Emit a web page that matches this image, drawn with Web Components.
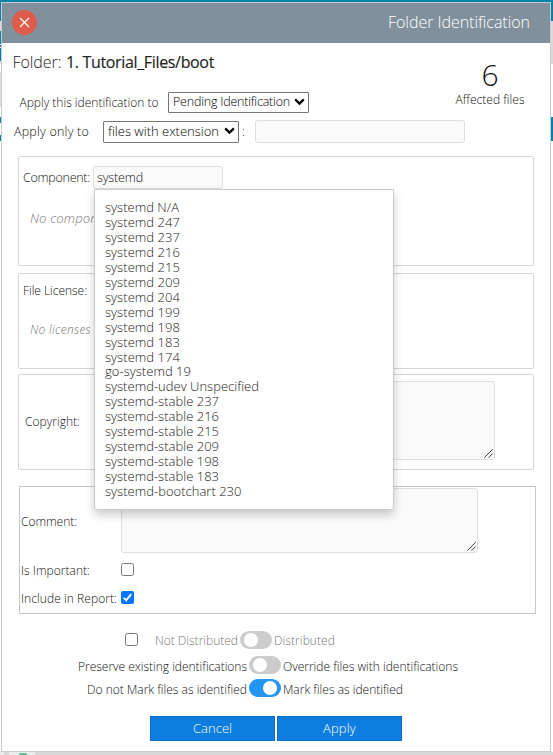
<!DOCTYPE html>
<html lang="en"><head><meta charset="utf-8"><title>Folder Identification</title>
<style>
html,body{margin:0;height:755px;overflow:hidden}
body{font-family:"Open Sans","Noto Sans",sans-serif;font-weight:300;font-size:12px;color:#111}
</style></head><body><app-page></app-page>
<script>
const define=(name,html,init)=>customElements.define(name,class extends HTMLElement{
  connectedCallback(){
    if(this.shadowRoot)return;
    this.attachShadow({mode:'open'}).innerHTML='<style>*{box-sizing:border-box}</style>'+html;
    if(init)init.call(this,this.shadowRoot);
  }
});
// Single line of text, tracked to the width given in "w"
define('ui-text',`<style>:host{display:block;white-space:nowrap;flex:none}span{display:inline-block}</style><span><slot></slot></span>`,function(r){
  const w=+this.getAttribute('w'),s=r.querySelector('span'),n=this.textContent.length;
  if(this.hasAttribute('size'))s.style.fontSize=this.getAttribute('size')+'px';
  if(w){this.style.width=w+'px';s.style.letterSpacing=((w-s.getBoundingClientRect().width)/n).toFixed(4)+'px';}
});
define('ui-select',`<style>:host{display:flex;box-sizing:border-box;align-items:center;border:1px solid #767676;border-radius:1px;background:#fff;padding:0 3px 1px 4px;justify-content:space-between;color:#000;flex:none}</style>
<slot></slot><svg width="11" height="8" viewBox="0 0 11 8"><path d="M1.2 1.4 5.5 5.6 9.8 1.4" fill="none" stroke="#000" stroke-width="2.2"/></svg>`);
define('ui-input',`<style>:host{display:flex;box-sizing:border-box;align-items:center;border:1px solid #dedede;border-radius:3px;background:#fafafa;padding-left:3px;flex:none}</style><slot></slot>`);
define('ui-textarea',`<style>:host{display:flex;box-sizing:border-box;align-items:flex-end;justify-content:flex-end;border:1px solid #dedede;border-radius:3px;background:#fafafa;flex:none;padding:1px}</style>
<svg width="9" height="9" viewBox="0 0 9 9"><path d="M.3 8.7 8.7 .3M4.5 8.7 8.7 4.5" stroke="#444" stroke-width="1" fill="none"/></svg>`);
define('ui-check',`<style>:host{display:block;width:13px;height:13px;flex:none}svg{display:block}.on{display:none}:host([checked]) .on{display:block}:host([checked]) .off{display:none}</style>
<svg width="13" height="13"><rect class="off" x=".5" y=".5" width="12" height="12" rx="2" fill="#fff" stroke="#767676"/><g class="on"><rect width="13" height="13" rx="2" fill="#0075ff"/><path d="M2.7 6.9 5.2 9.3 10.2 3.2" fill="none" stroke="#fff" stroke-width="2"/></g></svg>`);
define('ui-toggle',`<style>:host{display:flex;box-sizing:border-box;width:32px;height:18px;border-radius:9px;background:#ccc;padding:2px 4px;flex:none}i{width:14px;height:14px;border-radius:7px;background:#fff}:host([on]){background:#2196f3;justify-content:flex-end;padding-right:4px}</style><i></i>`);
define('ui-button',`<style>:host{display:flex;box-sizing:border-box;width:125px;height:25px;align-items:center;justify-content:center;background:#0d7de0;border:1px solid #0b6fca;color:#fff;font-size:13px;padding-bottom:1px}</style><slot></slot>`);
define('ui-panel',`<style>:host{display:block;box-sizing:border-box;border:1px solid #d5d5d5;border-radius:2px;position:relative}</style><slot></slot>`);
define('suggest-list',`<style>:host{display:block;box-sizing:border-box;position:absolute;left:75px;top:32px;width:300px;height:321px;background:#fff;border:1px solid #ccc;border-radius:0 0 3px 3px;box-shadow:0 5px 10px rgba(0,0,0,.2);padding:10px;z-index:5;font-size:13px;color:#222}
ui-text{height:15px;line-height:15px}ui-text:nth-child(12){height:14px}</style><div></div>`,function(r){
  r.querySelector('div').innerHTML='<i hidden></i>'+[['systemd N/A',74],['systemd 247',75],['systemd 237',75],['systemd 216',75],['systemd 215',75],['systemd 209',75],['systemd 204',75],['systemd 199',75],['systemd 198',75],['systemd 183',75],['systemd 174',75],['go-systemd 19',86],['systemd-udev Unspecified',154],['systemd-stable 237',114],['systemd-stable 216',114],['systemd-stable 215',114],['systemd-stable 209',114],['systemd-stable 198',114],['systemd-stable 183',114],['systemd-bootchart 230',136.5]].map(([t,w])=>`<ui-text w="${w}">${t}</ui-text>`).join('');
});
define('dialog-header',`<style>:host{display:flex;box-sizing:border-box;height:40px;background:#80919d;align-items:center;justify-content:space-between;padding:0 20px 2px 10px;color:#fff}svg{display:block}</style>
<svg width="25" height="25"><circle cx="12.5" cy="12.5" r="12.5" fill="#dc5b4b"/><path d="M8 8 17 17M17 8 8 17" stroke="#fff" stroke-width="1.2"/></svg><ui-text w="142" size="16">Folder Identification</ui-text>`);
define('dialog-intro',`<style>:host{display:flex;height:113px}.main{width:448px;flex:none}
.row{display:flex;align-items:center}.a{height:38px;padding:0 0 0 10.5px;gap:4.5px;font-size:16px;color:#222}.a b{font-weight:400;-webkit-text-stroke:.15px #222}
.b{height:22px;margin-top:10px;padding-left:17.5px}.c{height:23px;margin-top:7px;padding-left:12px}
.count{width:80px;flex:none;padding:14px 0 0;display:flex;flex-direction:column;align-items:center}.n{font-size:30px;line-height:35px}.l{line-height:16px}
</style><div class="main"><div class="row a"><ui-text w="49">Folder:</ui-text><b><ui-text w="148">1. Tutorial_Files/boot</ui-text></b></div>
<div class="row b"><ui-text w="139" style="margin-right:9.5px">Apply this identification to</ui-text><ui-select style="width:141px;height:21px"><ui-text w="117" size="12.5">Pending Identification</ui-text></ui-select></div>
<div class="row c"><ui-text w="75" size="12.5" style="margin-right:14px">Apply only to</ui-text><ui-select style="width:136px;height:22px"><ui-text w="111" size="13">files with extension</ui-text></ui-select><ui-text w="3" style="margin:0 10px 0 3px">:</ui-text><ui-input style="width:210px;height:23px"></ui-input></div></div>
<div class="count"><div class="n">6</div><ui-text class="l" w="69">Affected files</ui-text></div>`);
define('dialog-panels',`<style>:host{display:block;padding-left:16px}.r{display:flex;align-items:center}.em{font-style:italic;color:#777}</style>
<ui-panel style="width:516px;height:110px"><div class="r" style="padding:9px 0 0 4px"><ui-text w="67" style="margin-right:3px" size="12.5">Component:</ui-text><ui-input style="width:130px;height:23px"><ui-text w="46" size="12.5">systemd</ui-text></ui-input></div>
<div class="em" style="padding:20px 0 0 11px"><ui-text w="92" size="13">No components</ui-text></div><suggest-list></suggest-list></ui-panel>
<ui-panel style="width:516px;height:96px;margin-top:7px"><div style="padding:8px 0 0 4px"><ui-text w="64">File License:</ui-text></div><div class="em" style="padding:22px 0 0 11px"><ui-text w="61">No licenses</ui-text></div></ui-panel>
<ui-panel style="width:516px;height:96px;margin-top:5px"><div class="r" style="padding:6px 0 0 6px"><ui-text w="55" style="margin-right:41px;padding-top:2px">Copyright:</ui-text><ui-textarea style="width:374px;height:79px"></ui-textarea></div></ui-panel>
<ui-panel style="width:517px;height:128px;margin:16px 0 0 1px;border-color:#c6c6c6;border-radius:0"><div class="r" style="padding:1px 0 0 1px"><ui-text w="56" style="margin-right:44px;padding-top:2px">Comment:</ui-text><ui-textarea style="width:357px;height:65px"></ui-textarea></div>
<div class="r" style="height:28px;margin-top:3px;padding:1px 0 0 1px"><ui-text w="69" style="margin-right:31px">Is Important:</ui-text><ui-check style="margin-top:-2px"></ui-check></div>
<div class="r" style="height:28px;padding:1px 0 0 1px"><ui-text w="96" style="margin-right:4px">Include in Report:</ui-text><ui-check checked style="margin-top:-2px"></ui-check></div></ui-panel>`);
define('dialog-options',`<style>:host{display:block;padding-top:17px}.r{display:flex;align-items:center;height:18px}ui-text{line-height:18px;padding-top:4px}.d ui-text{padding-top:2px}ui-toggle{margin:0 2px}</style>
<div class="r d" style="padding-left:123px;color:#777"><ui-check style="margin:-1px 17px 0 0"></ui-check><ui-text w="83">Not Distributed</ui-text><ui-toggle></ui-toggle><ui-text w="61">Distributed</ui-text></div>
<div class="r" style="padding-left:76px;margin-top:7px"><ui-text w="169">Preserve existing identifications</ui-text><ui-toggle></ui-toggle><ui-text w="175">Override files with identifications</ui-text></div>
<div class="r" style="padding-left:85px;margin-top:5px"><ui-text w="160">Do not Mark files as identified</ui-text><ui-toggle on></ui-toggle><ui-text w="120">Mark files as identified</ui-text></div>`);
define('app-dialog',`<style>:host{display:block;box-sizing:border-box;width:550px;height:750px;background:#fff;border:1px solid #ccc}.f{display:flex;gap:2px;padding:19px 0 0 148px}</style>
<dialog-header></dialog-header><dialog-intro></dialog-intro><dialog-panels></dialog-panels><dialog-options></dialog-options><div class="f"><ui-button><ui-text w="39">Cancel</ui-text></ui-button><ui-button><ui-text w="33">Apply</ui-text></ui-button></div>`);
// Slivers of the page behind the dialog show around its edges
define('app-page',`<style>:host{display:grid;grid-template:2px 750px 3px/1px 550px 2px;height:755px;width:553px}.t{grid-column:1/4;background:#0083ab}
.l{background:linear-gradient(#0083ab 19px,#d9d9d9 19px 29px,#0083ab 29px 42px,#fff 42px 43px,#0083ab 43px 45px,#fff 45px 46px,#0083ab 46px 59px,#d9d9d9 59px 62px,#fff 62px 70px,#ddd 70px 105px,#fff 105px 115px,#0083ab 115px 121px,#fff 121px 133px,#0083ab 133px 139px,#fff 139px)}
.r{background:linear-gradient(#0083ab 19px,#d9d9d9 19px 62px,#fff 62px 115px,#0083ab 115px 139px,#fff 139px)}
.b{grid-column:1/4;background:#d8d8d8;overflow:hidden;display:flex;gap:5px}.b i{height:3px;background:#ececec;width:4px}.b i+i{width:26px;background:radial-gradient(ellipse 5px 1.5px at 14px 2px,#54c398 60%,#ececec)}</style>
<div class="t"></div><div class="l"></div><app-dialog></app-dialog><div class="r"></div><div class="b"><i></i><i></i></div>`);
</script></body></html>
